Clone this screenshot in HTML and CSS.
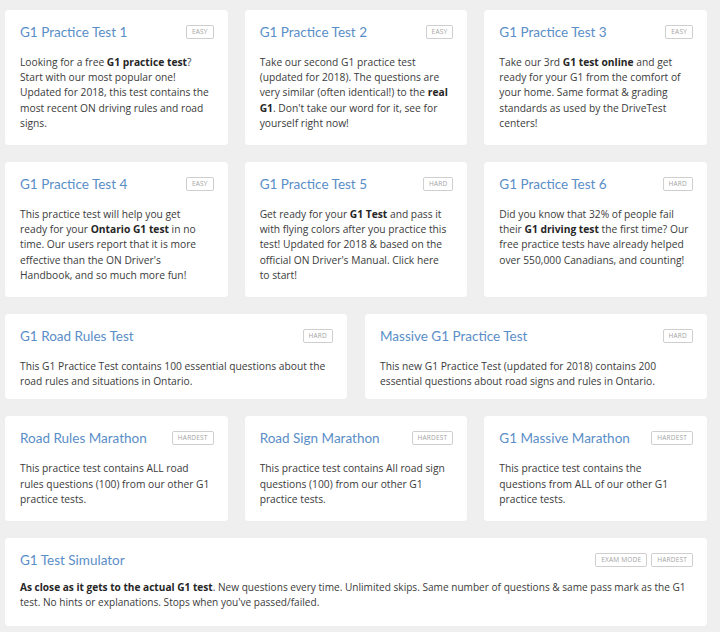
FILE: index.html
```html
<!DOCTYPE html>
<html lang="en">
<head>
<meta charset="utf-8">
<title>G1 Practice Tests</title>
<link rel="stylesheet" href="styles.css">
</head>
<body>
<main class="page">
  <section class="row row-3">
    <article class="card">
      <div class="head"><h2 class="title">G1 Practice Test 1</h2><div class="tags"><span class="tag">Easy</span></div></div>
      <p class="text">Looking for a free <b>G1 practice test</b>? Start with our most popular one! Updated for 2018, this test contains the most recent ON driving rules and road signs.</p>
    </article>
    <article class="card">
      <div class="head"><h2 class="title">G1 Practice Test 2</h2><div class="tags"><span class="tag">Easy</span></div></div>
      <p class="text">Take our second G1 practice test (updated for 2018). The questions are very similar (often identical!) to the <b>real G1</b>. Don't take our word for it, see for yourself right now!</p>
    </article>
    <article class="card">
      <div class="head"><h2 class="title">G1 Practice Test 3</h2><div class="tags"><span class="tag">Easy</span></div></div>
      <p class="text">Take our 3rd <b>G1 test online</b> and get ready for your G1 from the comfort of your home. Same format &amp; grading standards as used by the DriveTest centers!</p>
    </article>
  </section>
  <section class="row row-3">
    <article class="card">
      <div class="head"><h2 class="title">G1 Practice Test 4</h2><div class="tags"><span class="tag">Easy</span></div></div>
      <p class="text">This practice test will help you get ready for your <b>Ontario G1 test</b> in no time. Our users report that it is more effective than the ON Driver's Handbook, and so much more fun!</p>
    </article>
    <article class="card">
      <div class="head"><h2 class="title">G1 Practice Test 5</h2><div class="tags"><span class="tag">Hard</span></div></div>
      <p class="text">Get ready for your <b>G1 Test</b> and pass it with flying colors after you practice this test! Updated for 2018 &amp; based on the official ON Driver's Manual. Click here to start!</p>
    </article>
    <article class="card">
      <div class="head"><h2 class="title">G1 Practice Test 6</h2><div class="tags"><span class="tag">Hard</span></div></div>
      <p class="text">Did you know that 32% of people fail their <b>G1 driving test</b> the first time? Our free practice tests have already helped over 550,000 Canadians, and counting!</p>
    </article>
  </section>
  <section class="row row-2">
    <article class="card card-short">
      <div class="head"><h2 class="title">G1 Road Rules Test</h2><div class="tags"><span class="tag">Hard</span></div></div>
      <p class="text">This G1 Practice Test contains 100 essential questions about the road rules and situations in Ontario.</p>
    </article>
    <article class="card card-short">
      <div class="head"><h2 class="title">Massive G1 Practice Test</h2><div class="tags"><span class="tag">Hard</span></div></div>
      <p class="text">This new G1 Practice Test (updated for 2018) contains 200 essential questions about road signs and rules in Ontario.</p>
    </article>
  </section>
  <section class="row row-3">
    <article class="card">
      <div class="head"><h2 class="title">Road Rules Marathon</h2><div class="tags"><span class="tag">Hardest</span></div></div>
      <p class="text">This practice test contains ALL road rules questions (100) from our other G1 practice tests.</p>
    </article>
    <article class="card">
      <div class="head"><h2 class="title">Road Sign Marathon</h2><div class="tags"><span class="tag">Hardest</span></div></div>
      <p class="text">This practice test contains All road sign questions (100) from our other G1 practice tests.</p>
    </article>
    <article class="card">
      <div class="head"><h2 class="title">G1 Massive Marathon</h2><div class="tags"><span class="tag">Hardest</span></div></div>
      <p class="text">This practice test contains the questions from ALL of our other G1 practice tests.</p>
    </article>
  </section>
  <section class="row row-1">
    <article class="card card-wide">
      <div class="head"><h2 class="title">G1 Test Simulator</h2><div class="tags"><span class="tag">Exam Mode</span><span class="tag">Hardest</span></div></div>
      <p class="text text-wide"><b>As close as it gets to the actual G1 test</b>. New questions every time. Unlimited skips. Same number of questions &amp; same pass mark as the G1 test. No hints or explanations. Stops when you've passed/failed.</p>
    </article>
  </section>
</main>
</body>
</html>
```

FILE: styles.css
```css
html, body {
  margin: 0;
  padding: 0;
  background: #efefef;
}
body {
  font-family: "Open Sans", "Noto Sans", "Liberation Sans", sans-serif;
  color: #3b3b3b;
}
.page {
  width: 702px;
  padding: 10px 13px 0 5px;
  display: flex;
  flex-direction: column;
  gap: 17px;
}
.row {
  display: grid;
  gap: 17px;
}
.row-3 { grid-template-columns: repeat(3, 1fr); }
.row-2 { grid-template-columns: repeat(2, 1fr); gap: 18px; }
.row-1 { grid-template-columns: 1fr; }
.card {
  background: #ffffff;
  border-radius: 3px;
  padding: 13px 14px 14px 15px;
  box-shadow: 0 0 1px rgba(0, 0, 0, 0.06);
}
.card-short {
  padding-bottom: 10px;
}
.card-wide {
  padding-bottom: 16px;
}
.head {
  display: flex;
  align-items: center;
  justify-content: space-between;
  gap: 8px;
  margin-bottom: 14px;
}
.card-wide .head {
  margin-bottom: 11px;
}
.title {
  margin: 0;
  font-family: Lato, "Open Sans", sans-serif;
  font-size: 13.5px;
  line-height: 18px;
  font-weight: 400;
  color: #5a8ec7;
  white-space: nowrap;
}
.tags {
  display: flex;
  gap: 4px;
}
.tag {
  display: inline-block;
  border: 1px solid #cfcfcf;
  border-radius: 2px;
  padding: 2px 5px;
  font-size: 6.5px;
  line-height: 8px;
  text-transform: uppercase;
  letter-spacing: 0.2px;
  color: #a3a3a3;
}
.text {
  margin: 0;
  padding-right: 4.2px;
  font-size: 10.25px;
  line-height: 15.2px;
}
.text-wide {
  font-size: 10.1px;
  padding-right: 0;
}
.text b {
  font-weight: 700;
  color: #262626;
}
```
